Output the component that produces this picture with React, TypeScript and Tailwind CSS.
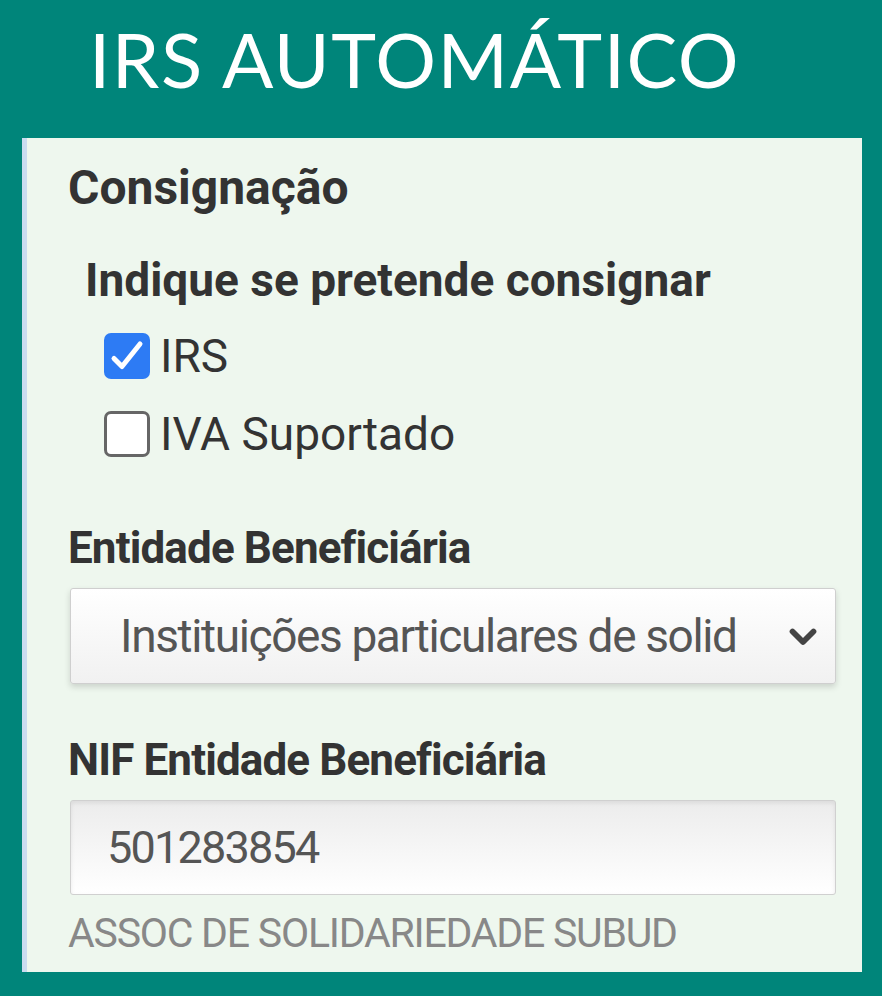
import React from "react";

export default function App() {
  return (
    <div className="w-[882px] h-[996px] bg-[#00857a] flex flex-col">
      <div className="h-[138px] pl-[89px] pt-[11px]">
        <h1 className="text-white text-[76px] leading-[96px] font-normal tracking-[0.02em] [font-family:Lato,'Noto_Sans',sans-serif]">
          IRS AUTOMÁTICO
        </h1>
      </div>
      <div className="mx-[22px] w-[840px] h-[834px] bg-[#eef7ee] border-l-[5px] border-[#c9dcf0] pl-[41px] pr-[21px] pt-[20px] flex flex-col [font-family:Roboto,'Liberation_Sans',sans-serif]">
        <div className="text-[48px] leading-[60px] font-bold text-[#333]">Consignação</div>
        <div className="mt-[34px] ml-[17px] text-[46px] leading-[56px] font-bold text-[#333]">Indique se pretende consignar</div>
        <label className="mt-[13px] ml-[36px] flex items-center gap-[10px] h-[70px]">
          <span className="w-[46px] h-[46px] rounded-[7px] bg-[#2d7bf4] flex items-center justify-center">
            <svg viewBox="0 0 46 46" className="w-[46px] h-[46px]" fill="none" stroke="white" strokeWidth="5" strokeLinecap="round" strokeLinejoin="round">
              <path d="M10 25.5l8 8L36 11" />
            </svg>
          </span>
          <span className="text-[46px] text-[#333]">IRS</span>
        </label>
        <label className="mt-[8px] ml-[36px] flex items-center gap-[10px] h-[70px]">
          <span className="w-[46px] h-[46px] rounded-[7px] bg-white border-[3px] border-[#666]" />
          <span className="text-[46px] text-[#333]">IVA Suportado</span>
        </label>
        <div className="mt-[51px] text-[44px] leading-[56px] font-bold text-[#333] tracking-[-0.02em]">Entidade Beneficiária</div>
        <div className="mt-[12px] ml-[2px] w-[766px] h-[96px] rounded-[3px] border border-[#cfcfcf] bg-gradient-to-b from-white to-[#f1f1f1] shadow-[0_3px_6px_rgba(0,0,0,0.15)] flex items-center pl-[49px] pr-[14px]">
          <span className="flex-1 text-[46px] text-[#555] tracking-[-0.03em] whitespace-nowrap overflow-hidden">Instituições particulares de solid</span>
          <svg viewBox="0 0 24 24" className="w-[36px] h-[36px]" fill="none" stroke="#444" strokeWidth="3.8" strokeLinecap="round" strokeLinejoin="round">
            <path d="M5 9l7 7 7-7" />
          </svg>
        </div>
        <div className="mt-[48px] text-[44px] leading-[56px] font-bold text-[#333] tracking-[-0.02em]">NIF Entidade Beneficiária</div>
        <div className="mt-[12px] ml-[2px] w-[766px] h-[95px] rounded-[3px] border border-[#d0d0d0] bg-gradient-to-b from-[#ececec] to-white shadow-[inset_0_2px_4px_rgba(0,0,0,0.08)] flex items-center pl-[36px]">
          <span className="text-[45px] text-[#555] tracking-[-0.04em]">501283854</span>
        </div>
        <div className="mt-[15px] text-[41px] leading-[46px] text-[#888] tracking-[-0.03em]">ASSOC DE SOLIDARIEDADE SUBUD</div>
      </div>
    </div>
  );
}
